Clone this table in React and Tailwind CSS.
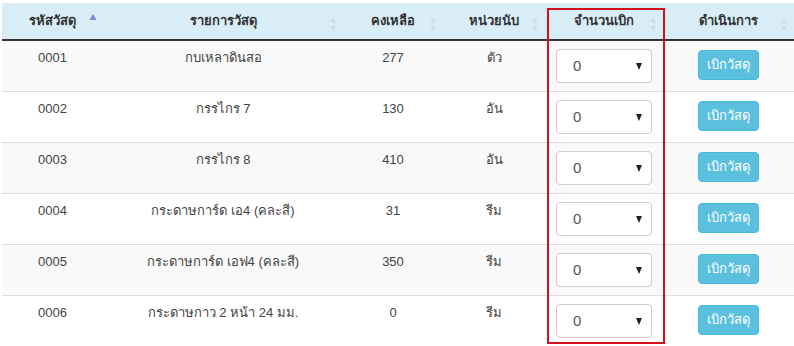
import React from "react";

const rows = [
  { code: "0001", name: "กบเหลาดินสอ", stock: 277, unit: "ตัว" },
  { code: "0002", name: "กรรไกร 7", stock: 130, unit: "อัน" },
  { code: "0003", name: "กรรไกร 8", stock: 410, unit: "อัน" },
  { code: "0004", name: "กระดาษการ์ด เอ4 (คละสี)", stock: 31, unit: "รีม" },
  { code: "0005", name: "กระดาษการ์ด เอฟ4 (คละสี)", stock: 350, unit: "รีม" },
  { code: "0006", name: "กระดาษกาว 2 หน้า 24 มม.", stock: 0, unit: "รีม" },
];

const columns = [
  { label: "รหัสวัสดุ", width: "w-[101px]", active: true },
  { label: "รายการวัสดุ", width: "w-[240px]" },
  { label: "คงเหลือ", width: "w-[100px]" },
  { label: "หน่วยนับ", width: "w-[102px]" },
  { label: "จำนวนเบิก", width: "w-[118px]" },
  { label: "ดำเนินการ", width: "w-[131px]" },
];

// datatables style sort arrows
function SortIcon({ active }) {
  if (active) {
    return (
      <svg width="8" height="20" viewBox="0 0 8 20" className="absolute right-[6px] top-[6px]">
        <polygon points="4,5 7.5,11 0.5,11" fill="#7d86d8" />
      </svg>
    );
  }
  return (
    <svg width="8" height="14" viewBox="0 0 8 14" className="absolute right-[6px] top-[15px]">
      <polygon points="4,0 7,5 1,5" fill="#d6dbe0" />
      <polygon points="4,13 7,8 1,8" fill="#d6dbe0" />
    </svg>
  );
}

export default function App() {
  return (
    <div className="relative bg-white w-[794px] h-[346px] overflow-hidden pt-[3px] pl-[2px] font-['Liberation_Sans','Noto_Sans',sans-serif] text-[13px] text-[#333]">
      <table className="border-collapse table-fixed w-[792px]">
        <thead>
          <tr className="bg-[#d9edf7] border-b-2 border-[#333]">
            {columns.map((col) => (
              <th
                key={col.label}
                className={`${col.width} relative h-[37px] px-2 text-center font-bold leading-5`}
              >
                {col.label}
                <SortIcon active={col.active} />
              </th>
            ))}
          </tr>
        </thead>
        <tbody>
          {rows.map((row, i) => (
            <tr
              key={row.code}
              className={`${i % 2 === 0 ? "bg-[#f9f9f9]" : "bg-white"} border-t border-[#ddd] h-[51px]`}
            >
              <td className="align-top text-center pt-[7px] leading-5 text-[#444]">{row.code}</td>
              <td className="align-top text-center pt-[7px] leading-5 text-[#444]">{row.name}</td>
              <td className="align-top text-center pt-[7px] leading-5 text-[#444]">{row.stock}</td>
              <td className="align-top text-center pt-[7px] leading-5 text-[#444]">{row.unit}</td>
              <td className="align-top pt-[8px] pb-[8px]">
                <div className="relative mx-auto w-[96px] h-[34px]">
                  <select
                    defaultValue="0"
                    className="appearance-none w-full h-full rounded-[4px] border border-[#ccc] bg-white pl-[16px] text-[15px] text-[#555] outline-none"
                  >
                    <option value="0">0</option>
                    <option value="1">1</option>
                    <option value="2">2</option>
                  </select>
                  <svg width="6" height="7" viewBox="0 0 6 7" className="absolute right-[10px] top-[14px] pointer-events-none">
                    <polygon points="0,0 6,0 3,7" fill="#222" />
                  </svg>
                </div>
              </td>
              <td className="align-top pt-[9px] text-center">
                <button className="w-[61px] h-[30px] rounded-[4px] border border-[#46b8da] bg-[#5bc0de] text-white text-[13px]">
                  เบิกวัสดุ
                </button>
              </td>
            </tr>
          ))}
        </tbody>
      </table>

      {/* red highlight box around the quantity column */}
      <div className="absolute left-[547px] top-[8px] w-[118px] h-[336px] border-2 border-[#d2111b] pointer-events-none" />
    </div>
  );
}
